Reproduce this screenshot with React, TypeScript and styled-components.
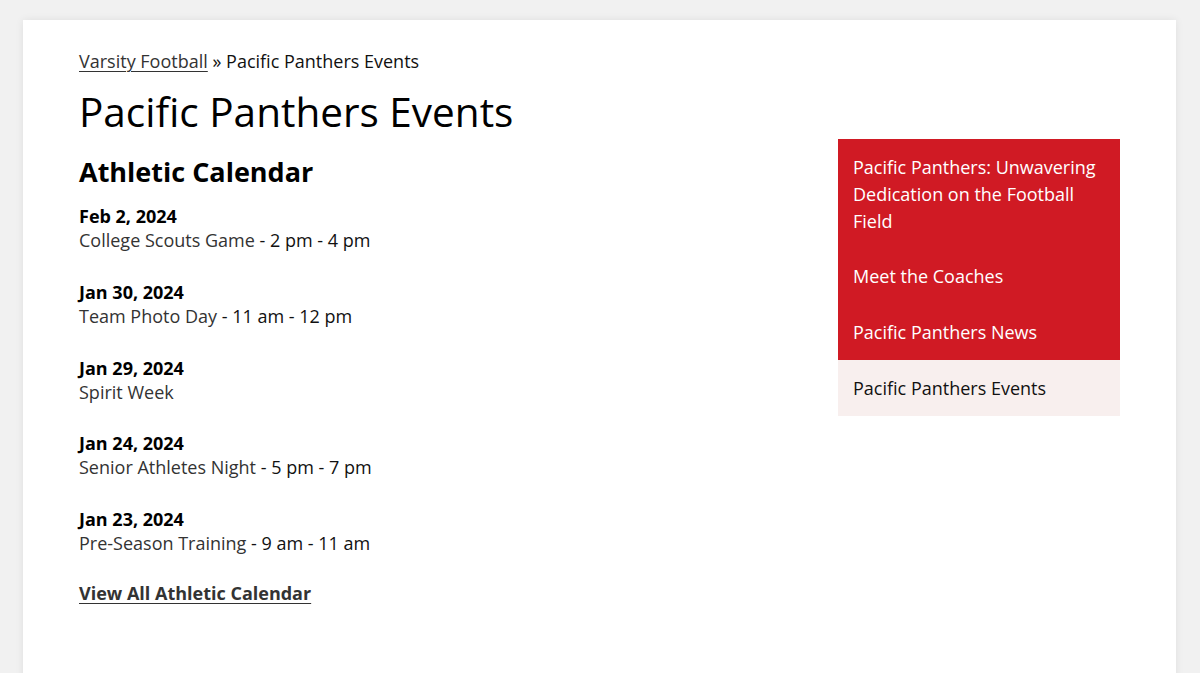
import * as React from "react";
import styled, { createGlobalStyle } from "styled-components";

const GlobalStyle = createGlobalStyle`
  html, body {
    margin: 0;
    padding: 0;
    background: #f1f1f1;
    font-family: "Open Sans", "Noto Sans", sans-serif;
    color: #000;
  }
`;

const Page = styled.div`
  padding: 20px 24px 0 23px;
  height: 673px;
  box-sizing: border-box;
  overflow: hidden;
`;

const Card = styled.div`
  background: #fff;
  box-shadow: 0 0 8px rgba(0, 0, 0, 0.08);
  min-height: 700px;
  padding: 28px 56px 0 56px;
  box-sizing: border-box;
`;

const Breadcrumb = styled.div`
  font-size: 18px;
  line-height: 27px;
  color: #111;
`;

const CrumbLink = styled.a`
  color: #333;
  text-decoration: underline;
  text-underline-offset: 3px;
  text-decoration-thickness: 1px;
`;

const Title = styled.h1`
  font-size: 40.5px;
  font-weight: 400;
  line-height: 48px;
  margin: 13px 0 3px 0;
`;

const Columns = styled.div`
  display: flex;
  justify-content: space-between;
  align-items: flex-start;
`;

const Main = styled.section`
  flex: 1;
`;

const SectionTitle = styled.h2`
  font-size: 27px;
  font-weight: 700;
  line-height: 34px;
  margin: 16px 0 15px 0;
`;

const EventItem = styled.div`
  margin-bottom: 27.75px;
`;

const EventDate = styled.div`
  font-size: 18px;
  font-weight: 700;
  line-height: 24px;
`;

const EventLine = styled.div`
  font-size: 18px;
  line-height: 24px;
  color: #111;
`;

const EventName = styled.span`
  color: #333;
`;

const ViewAll = styled.a`
  display: inline-block;
  font-size: 18px;
  font-weight: 700;
  line-height: 27px;
  color: #333;
  text-decoration: underline;
  text-underline-offset: 3px;
  margin-top: -4px;
`;

const SideNav = styled.nav`
  width: 282px;
  display: flex;
  flex-direction: column;
`;

const SideItem = styled.a<{ $active?: boolean }>`
  display: block;
  padding: 14.5px 15px 14.25px 15px;
  font-size: 18px;
  line-height: 27px;
  background: ${(p) => (p.$active ? "#f8efee" : "#d01a24")};
  color: ${(p) => (p.$active ? "#111" : "#fff")};
  text-decoration: none;
`;

const events = [
  { date: "Feb 2, 2024", name: "College Scouts Game", time: " - 2 pm - 4 pm" },
  { date: "Jan 30, 2024", name: "Team Photo Day", time: " - 11 am - 12 pm" },
  { date: "Jan 29, 2024", name: "Spirit Week", time: "" },
  { date: "Jan 24, 2024", name: "Senior Athletes Night", time: " - 5 pm - 7 pm" },
  { date: "Jan 23, 2024", name: "Pre-Season Training", time: " - 9 am - 11 am" },
];

const links = [
  "Pacific Panthers: Unwavering Dedication on the Football Field",
  "Meet the Coaches",
  "Pacific Panthers News",
  "Pacific Panthers Events",
];

export default function App() {
  return (
    <Page>
      <GlobalStyle />
      <Card>
        <Breadcrumb>
          <CrumbLink href="#">Varsity Football</CrumbLink> » Pacific Panthers Events
        </Breadcrumb>
        <Title>Pacific Panthers Events</Title>
        <Columns>
          <Main>
            <SectionTitle>Athletic Calendar</SectionTitle>
            {events.map((e) => (
              <EventItem key={e.date}>
                <EventDate>{e.date}</EventDate>
                <EventLine>
                  <EventName>{e.name}</EventName>
                  {e.time}
                </EventLine>
              </EventItem>
            ))}
            <ViewAll href="#">View All Athletic Calendar</ViewAll>
          </Main>
          <SideNav>
            {links.map((l, i) => (
              <SideItem key={l} href="#" $active={i === links.length - 1}>
                {l}
              </SideItem>
            ))}
          </SideNav>
        </Columns>
      </Card>
    </Page>
  );
}
